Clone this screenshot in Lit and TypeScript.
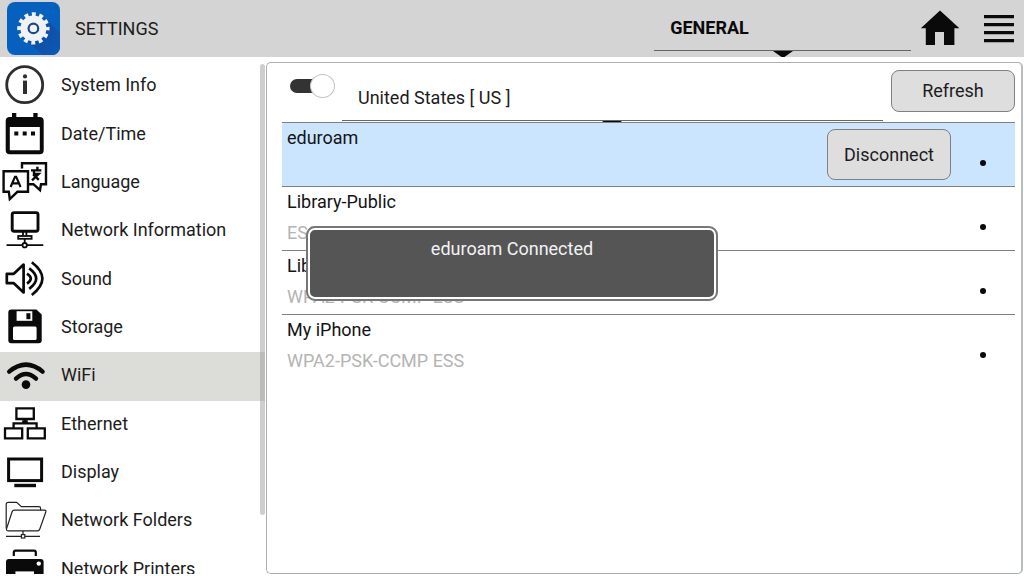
import { LitElement, html, svg, css } from "lit";
import { customElement, state } from "lit/decorators.js";
import { classMap } from "lit/directives/class-map.js";

const icons: Record<string, unknown> = {
  info: svg`<circle cx="24.7" cy="23.7" r="18" fill="none" stroke="#2e2e2e" stroke-width="2.8"/>
    <circle cx="25" cy="15.4" r="2.1" fill="#2e2e2e"/><rect x="23" y="19.6" width="4" height="13.4" fill="#2e2e2e"/>`,
  calendar: svg`<path fill="#0a0a0a" fill-rule="evenodd" d="M12 3h4.3v4h17V3h4.3v4h2.1a4 4 0 0 1 4 4v29.3a4 4 0 0 1-4 4h-30a4 4 0 0 1-4-4V11a4 4 0 0 1 4-4H12zM9.8 17v23.3h30V17z"/>
    <path fill="#0a0a0a" d="M14.3 21.5h4v4h-4zM22.7 21.5h4v4h-4zM31 21.5h4v4h-4z"/>`,
  language: svg`<g fill="none" stroke="#0a0a0a" stroke-width="2.4">
    <path d="M22 10.5V5.2H46V26.2H41L40 32.2L33.4 26.2H29"/>
    <path d="M3.6 13.3H28V33.8H17.4L9.8 41L8.8 33.8H3.6z"/>
    <path stroke-width="2.1" d="M10.6 29L15 18.8H16.2L20.6 29M12.4 25.4H19"/>
    <path d="M31 12.4H41.4M37.4 8.8V12.4M34 12.8V16H38.6L32 22.4M33.2 16.4L38.8 21.8"/></g>`,
  network: svg`<g fill="none" stroke="#0a0a0a" stroke-width="2"><rect x="12.2" y="6.6" width="25.8" height="18.6" rx="2" stroke-width="2.9"/>
    <path d="M23 26v3.5M26.4 26v3.5" stroke-width="1.8"/><rect x="18.2" y="30" width="13.4" height="2.8" stroke-width="1.8"/>
    <path d="M24.7 33v4M6.5 39.2H22.4M27 39.2H43.3" stroke-width="1.8"/><circle cx="24.7" cy="39.2" r="2.2" stroke-width="1.8"/></g>`,
  sound: svg`<g fill="none" stroke="#0a0a0a" stroke-width="2.7"><path d="M6.8 18.8H13.8L23.6 9.6V37.4L13.8 28.2H6.8z" stroke-linejoin="round"/>
    <path d="M27 18.6Q34.6 23.6 27 28.6M29.2 13.4Q43.2 23.6 29.2 33.8M31.8 7.2Q53 23.6 31.8 40"/></g>`,
  storage: svg`<path fill="#0a0a0a" d="M11.3 6.5H36.4L41.7 11.6V37.2a3 3 0 0 1-3 3H11.3a3 3 0 0 1-3-3V9.5a3 3 0 0 1 3-3z"/>
    <path fill="#fff" d="M16.6 8.2H32.3V17.8H16.6z"/><path fill="#0a0a0a" d="M26.4 10.2h4v6h-4z"/>
    <rect x="13" y="23.5" width="23.6" height="13.6" rx="1.5" fill="#fff"/>`,
  wifi: svg`<g fill="none" stroke="#0a0a0a" stroke-width="4.4" stroke-linecap="round"><path d="M9.2 20.6Q26 6.6 42.6 20.6M16 27.6Q26 18.4 36 27.6"/></g>
    <circle cx="26" cy="33.6" r="4.3" fill="#0a0a0a"/>`,
  ethernet: svg`<g fill="none" stroke="#0a0a0a" stroke-width="2.3"><path d="M16.4 8.4H33.8V19H16.4zM5 28.4H22.2V38.4H5zM27.8 28.4H44.8V38.4H27.8z"/>
    <path d="M25 19V23.4M13.6 28.4V23.4H36.6V28.4M22.2 21.4h5.6"/></g>`,
  display: svg`<rect x="8.6" y="11" width="33" height="21.6" fill="none" stroke="#0a0a0a" stroke-width="3"/><path fill="#0a0a0a" d="M14.3 35.8H36V39.2H14.3z"/>`,
  folder: svg`<g fill="none" stroke="#222" stroke-width="1.2"><path d="M6.2 32.5V8.4Q6.2 6.4 8.2 6.4H16.6L21.4 10.6H38.8Q40.6 10.6 40.6 12.4V14.2"/>
    <path d="M14.6 14.2H44.4Q46.4 14.2 45.8 16L39.8 33Q39.2 34.8 37.4 34.8H8Q6 34.8 6.6 32.6L12 16Q12.6 14.2 14.6 14.2z"/>
    <path d="M23 34.8V38.4M6 40.4H21.4M24.8 40.4H40"/><rect x="21.4" y="38.6" width="3.4" height="3.4"/></g>`,
  printer: svg`<path d="M13.8 11V7.4Q13.8 5.6 15.6 5.6H34Q35.8 5.6 35.8 7.4V11" fill="none" stroke="#0a0a0a" stroke-width="2.2"/>
    <path fill="#0a0a0a" d="M9 14H40.6a3 3 0 0 1 3 3V34H6V17a3 3 0 0 1 3-3z"/><circle cx="38.8" cy="18.6" r="2.2" fill="#fff"/><path fill="#fff" d="M15.4 26.4H34V34H15.4z"/>`,
};

const sections = [
  ["info", "System Info"],
  ["calendar", "Date/Time"],
  ["language", "Language"],
  ["network", "Network Information"],
  ["sound", "Sound"],
  ["storage", "Storage"],
  ["wifi", "WiFi"],
  ["ethernet", "Ethernet"],
  ["display", "Display"],
  ["folder", "Network Folders"],
  ["printer", "Network Printers"],
];

const networks = [
  { name: "eduroam", security: "", connected: true },
  { name: "Library-Public", security: "ESS", connected: false },
  { name: "Library", security: "WPA2-PSK-CCMP ESS", connected: false },
  { name: "My iPhone", security: "WPA2-PSK-CCMP ESS", connected: false },
];

@customElement("app-root")
export class AppRoot extends LitElement {
  @state() private current = "wifi";

  static styles = css`
    :host {
      display: flex;
      flex-direction: column;
      height: 100vh;
      overflow: hidden;
      position: relative;
      background: #fff;
      color: #1c1c1c;
      font: 18px/24px Roboto, "Liberation Sans", sans-serif;
    }
    * { box-sizing: border-box; }
    button, select { font: inherit; color: inherit; margin: 0; }
    svg { display: block; }
    .top {
      display: flex;
      align-items: center;
      flex: none;
      height: 57px;
      padding: 0 10px 0 7px;
      background: #d4d4d4;
      overflow: hidden;
    }
    .title { margin: 0 0 0 15px; font-size: 18px; font-weight: 400; flex: 1; }
    .picker { position: relative; }
    .picker select {
      appearance: none;
      display: block;
      width: 100%;
      border: 0;
      border-bottom: 1px solid #666;
      border-radius: 0;
      background: none;
      padding: 0 16px;
      outline: none;
    }
    .picker::after {
      content: "";
      position: absolute;
      top: 100%;
      left: 50%;
      margin-left: -10px;
      border: 10px solid transparent;
      border-top: 7px solid #0a0a0a;
      border-bottom: 0;
    }
    .general { width: 25.5%; margin-right: 9px; }
    .general select { height: 45px; font-weight: 700; color: #0a0a0a; }
    .tool { border: 0; padding: 0; background: none; }
    .tool + .tool { margin-left: 24px; }
    .body {
      flex: 1;
      min-height: 0;
      display: grid;
      grid-template-columns: 26% 1fr;
      padding: 5px 1px 2px 0;
    }
    .side { position: relative; overflow: hidden; min-height: 0; }
    .menu {
      list-style: none;
      margin: 0 1px 0 0;
      padding: 0;
      height: calc(100% + 20px);
      display: grid;
      grid-auto-rows: 1fr;
    }
    .link {
      display: flex;
      align-items: center;
      gap: 13px;
      height: 100%;
      padding-bottom: 2px;
      color: inherit;
      text-decoration: none;
    }
    .link svg { margin: -2px 0; }
    .link.active { background: #dcdcd8; }
    .thumb {
      position: absolute;
      top: 2px;
      right: 1px;
      width: 5px;
      height: 88%;
      border-radius: 3px;
      background: rgba(160, 155, 155, 0.5);
    }
    .panel {
      display: flex;
      flex-direction: column;
      border: 1px solid #a8b0b0;
      border-right: 2px solid #b8bcbc;
      border-radius: 5px;
      padding: 0 6px 0 15px;
    }
    .controls {
      display: flex;
      align-items: flex-start;
      height: 59px;
      padding-top: 7px;
      overflow: hidden;
    }
    .switch {
      appearance: none;
      flex: none;
      display: flex;
      align-items: center;
      width: 45px;
      height: 22px;
      margin: 5px 7px 0 8px;
      position: relative;
    }
    .switch::before { content: ""; width: 36px; height: 14px; border-radius: 7px; background: #333; }
    .switch::after {
      content: "";
      position: absolute;
      right: 0;
      width: 23px;
      height: 22px;
      border: 1px solid #c4c4c4;
      border-radius: 50%;
      background: #fff;
    }
    .country { flex: 1; margin-right: 8px; }
    .country select { height: 51px; padding-top: 6px; }
    .btn {
      width: 124px;
      border: 1px solid #808080;
      border-radius: 8px;
      background: #dedede;
      padding: 0;
    }
    .refresh { height: 42px; }
    .disconnect { height: 51px; }
    .nets { list-style: none; margin: 0; padding: 0; }
    .net {
      display: flex;
      height: 64px;
      border-top: 1px solid #808080;
      padding: 3px 29px 0 5px;
    }
    .net.on { background: #cce5ff; padding-top: 6px; }
    .net.on .text { margin-top: -3px; }
    .text { flex: 1; display: flex; flex-direction: column; gap: 7px; color: #141414; }
    .sec { color: #b4b4b4; }
    .dot { width: 6px; height: 6px; border-radius: 50%; background: #0a0a0a; margin: 34px 0 0 29px; }
    .net.on .dot { margin-top: 31px; }
    .toast {
      position: absolute;
      top: 226px;
      left: 50%;
      width: 412px;
      height: 75px;
      margin-left: -206px;
      border: 2px solid #777;
      border-radius: 9px;
      background: #555;
      padding: 9px;
      color: #f2f2f2;
      text-align: center;
    }
    .toast::before {
      content: "";
      position: absolute;
      inset: 0;
      border: 2px solid #fff;
      border-radius: 7px;
    }
  `;

  render() {
    return html`
      <header class="top">
        <svg width="53" height="53" viewBox="0 0 53 53" aria-hidden="true">
          <defs>
            <clipPath id="tile"><rect width="53" height="53" rx="8"/></clipPath>
            <linearGradient id="shade" x1="0" y1="0" x2="1" y2="1">
              <stop offset="0.2" stop-color="#1449a0"/><stop offset="1" stop-color="#0a5ab6"/>
            </linearGradient>
          </defs>
          <g clip-path="url(#tile)">
            <rect width="53" height="53" fill="#0560be"/>
            <path d="M38 16L53 31V53H36L19 38z" fill="url(#shade)"/>
            <circle cx="26.4" cy="26.4" r="8.6" fill="none" stroke="#f0f2f6" stroke-width="8.8"/>
            <circle cx="26.4" cy="26.4" r="14" fill="none" stroke="#f0f2f6" stroke-width="4.4" stroke-dasharray="3.9 3.43" stroke-dashoffset="1.95"/>
            <circle cx="26.4" cy="26.4" r="4.8" fill="#f0f2f6" stroke="#1d4a86" stroke-width="2.2"/>
          </g>
        </svg>
        <h1 class="title">SETTINGS</h1>
        <div class="picker general">
          <select aria-label="Section"><option>GENERAL</option></select>
        </div>
        <button class="tool" aria-label="Home">
          <svg width="40" height="40" viewBox="0 0 40 40"><path fill="#0a0a0a" d="M20 1.5L39.4 19.2H34.4V36H24V23H15V36H5.8V19.2H.8z"/></svg>
        </button>
        <button class="tool" aria-label="Menu">
          <svg width="30" height="30" viewBox="0 0 30 30"><path fill="#0a0a0a" d="M0 1h30v3.2H0zM0 9h30v3.2H0zM0 17h30v3.2H0zM0 25h30v3.2H0z"/></svg>
        </button>
      </header>
      <main class="body">
        <nav class="side">
          <ul class="menu">
            ${sections.map(([id, label]) => html`<li>
              <a href="#${id}" class=${classMap({ link: true, active: id === this.current })}
                @click=${() => (this.current = id)}>
                <svg width="48" height="48" viewBox="0 0 48 48" aria-hidden="true">${icons[id]}</svg>
                <span>${label}</span>
              </a>
            </li>`)}
          </ul>
          <div class="thumb"></div>
        </nav>
        <section class="panel">
          <div class="controls">
            <input class="switch" type="checkbox" role="switch" aria-label="WiFi" checked>
            <div class="picker country">
              <select aria-label="Country"><option>United States [ US ]</option></select>
            </div>
            <button class="btn refresh">Refresh</button>
          </div>
          <ul class="nets">
            ${networks.map((n) => html`<li class=${classMap({ net: true, on: n.connected })}>
              <div class="text"><span>${n.name}</span><span class="sec">${n.security}</span></div>
              ${n.connected ? html`<button class="btn disconnect">Disconnect</button>` : ""}
              <span class="dot"></span>
            </li>`)}
          </ul>
        </section>
      </main>
      <div class="toast" role="status">eduroam Connected</div>
    `;
  }
}
